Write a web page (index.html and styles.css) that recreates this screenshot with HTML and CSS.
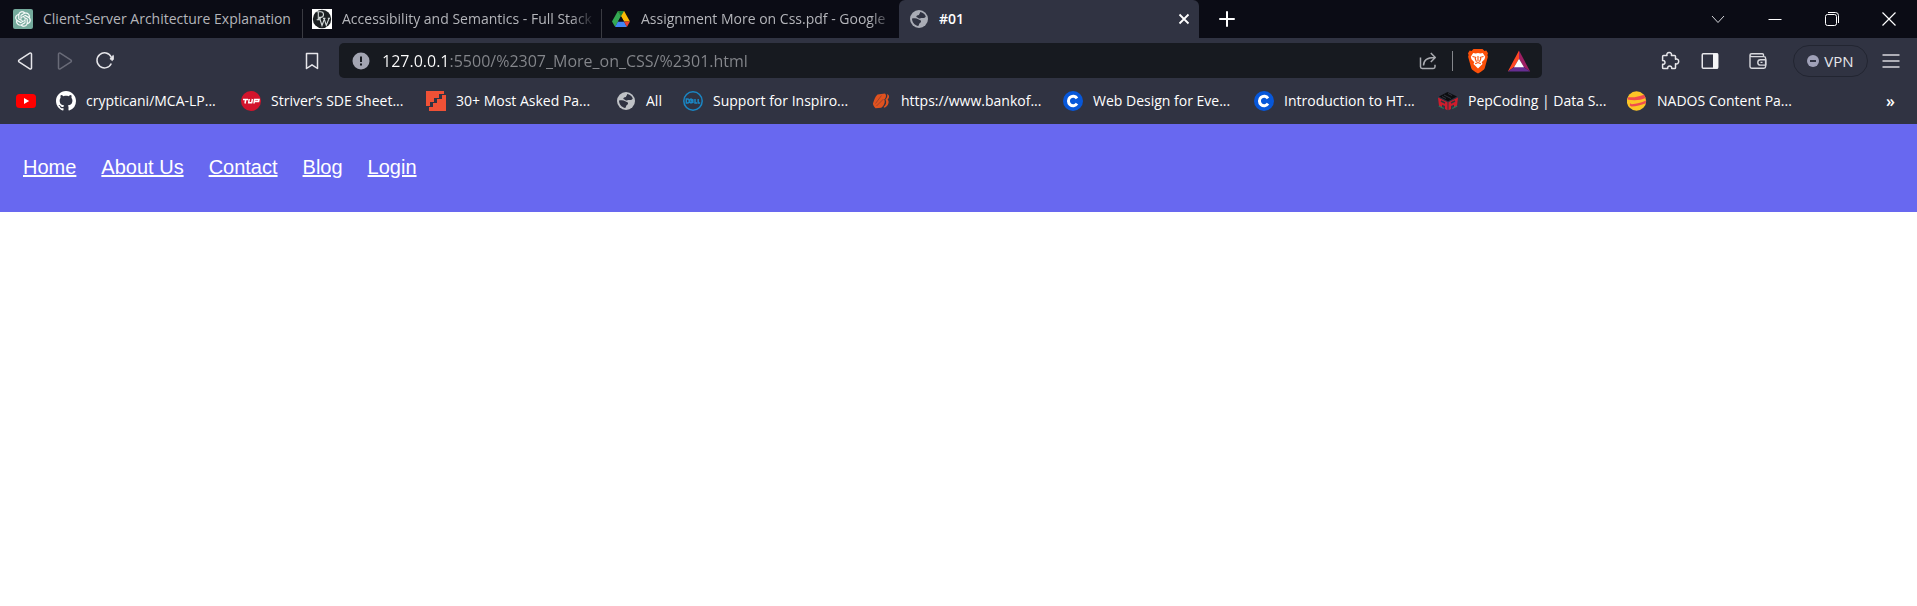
FILE: index.html
```html
<!DOCTYPE html>
<html lang="en">
<head>
<meta charset="utf-8">
<meta name="viewport" content="width=device-width, initial-scale=1">
<title>#01</title>
<link rel="stylesheet" href="styles.css">
</head>
<body>
<header class="browser">
  <div class="tabstrip">
    <div class="tab">
      <svg class="icon" viewBox="0 0 20 20" aria-hidden="true"><rect width="20" height="20" rx="2" fill="#74aa9c"/><path transform="translate(2.200 2.200) scale(.65)" fill="#fff" stroke="#fff" stroke-width=".3" d="M22.2819 9.8211a5.9847 5.9847 0 0 0-.5157-4.9108 6.0462 6.0462 0 0 0-6.5098-2.9A6.0651 6.0651 0 0 0 4.9807 4.1818a5.9847 5.9847 0 0 0-3.9977 2.9 6.0462 6.0462 0 0 0 .7427 7.0966 5.98 5.98 0 0 0 .511 4.9107 6.051 6.051 0 0 0 6.5146 2.9001A5.9847 5.9847 0 0 0 13.2599 24a6.0557 6.0557 0 0 0 5.7718-4.2058 5.9894 5.9894 0 0 0 3.9977-2.9001 6.0557 6.0557 0 0 0-.7475-7.0729zm-9.022 12.6081a4.4755 4.4755 0 0 1-2.8764-1.0408l.1419-.0804 4.7783-2.7582a.7948.7948 0 0 0 .3927-.6813v-6.7369l2.02 1.1686a.071.071 0 0 1 .038.052v5.5826a4.504 4.504 0 0 1-4.4945 4.4944zm-9.6607-4.1254a4.4708 4.4708 0 0 1-.5346-3.0137l.142.0852 4.783 2.7582a.7712.7712 0 0 0 .7806 0l5.8428-3.3685v2.3324a.0804.0804 0 0 1-.0332.0615L9.74 19.9502a4.4992 4.4992 0 0 1-6.1408-1.6464zM2.3408 7.8956a4.485 4.485 0 0 1 2.3655-1.9728V11.6a.7664.7664 0 0 0 .3879.6765l5.8144 3.3543-2.0201 1.1685a.0757.0757 0 0 1-.071 0l-4.8303-2.7865A4.504 4.504 0 0 1 2.3408 7.872zm16.5963 3.8558L13.1038 8.364 15.1192 7.2a.0757.0757 0 0 1 .071 0l4.8303 2.7913a4.4944 4.4944 0 0 1-.6765 8.1042v-5.6772a.79.79 0 0 0-.407-.667zm2.0107-3.0231l-.142-.0852-4.7735-2.7818a.7759.7759 0 0 0-.7854 0L9.409 9.2297V6.8974a.0662.0662 0 0 1 .0284-.0615l4.8303-2.7866a4.4992 4.4992 0 0 1 6.6802 4.66zM8.3065 12.863l-2.02-1.1638a.0804.0804 0 0 1-.038-.0567V6.0742a4.4992 4.4992 0 0 1 7.3757-3.4537l-.142.0805L8.704 5.459a.7948.7948 0 0 0-.3927.6813zm1.0976-2.3654l2.602-1.4998 2.6069 1.4998v2.9994l-2.5974 1.4997-2.6067-1.4997Z"/></svg>
      <button class="tab-title" type="button">Client-Server Architecture Explanation</button>
    </div>
    <div class="tab">
      <svg class="icon" viewBox="0 0 20 20" aria-hidden="true"><rect width="20" height="20" fill="#fff"/><circle cx="10" cy="10" r="9.200" fill="#1c2023"/><g fill="none" stroke="#d4dada" stroke-width="1.100"><path d="M4.500 2.800h4.200a2.700 2.700 0 0 1 0 5.600H7M6.300 3v7.500M4.700 10.800h3.600"/><path d="M7.600 9.200 10 16.500l2.300-6.300 2 6.200 2.800-7.200M6.400 9.200h2.500M11 9.400h2.400M15.800 9.200h2.200"/></g></svg>
      <button class="tab-title tab-title-faded" type="button">Accessibility and Semantics - Full Stack</button>
    </div>
    <div class="tab">
      <svg class="icon" viewBox="0 0 20 20" aria-hidden="true"><path fill="#fbbc04" d="M13.100 2 19 12.600h-6L6.900 2z"/><path fill="#34a853" d="M6.900 2 10 7.300 4.200 18 1 12.600z"/><path fill="#188038" d="M6.900 2h6.200L10 7.300z"/><path fill="#4285f4" d="M7 12.600h6L15.900 18H4.100z"/><path fill="#ea4335" d="M13 12.600h6L15.900 18z"/><path fill="#0b0c15" d="m10 7.300 3 5.300H7z"/></svg>
      <button class="tab-title tab-title-faded" type="button">Assignment More on Css.pdf - Google</button>
    </div>
    <div class="tab tab-active">
      <svg class="icon" viewBox="0 0 20 20" aria-hidden="true"><circle cx="10" cy="10" r="9" fill="#a9acb5"/><path fill="#303342" d="M11.100 3.100c2.600.4 4.900 2 5.700 4.500-.8 1.300-2.200 1.700-3.800 1.400-1.300-.3-1.500.6-2.700.5-1.400-.2-1.700-1.200-3-1.400.2-1.500 1-1.900 2.600-2 .3-1.400 1.300-1.500 1.200-3zM3 9.600c2.200-.3 4.600-.5 6.300.6 1.100.7 2.300.5 2.700 1.900.3 1.300-.8 1.700-1.600 2.500-.6.7-.1 1.800-1.200 2.400C5.900 16.600 3 13.500 3 9.600z"/></svg>
      <button class="tab-title" type="button">#01</button>
      <button class="tab-close" type="button" aria-label="Close tab"><svg width="12" height="12" viewBox="0 0 12 12"><path d="m1.500 1.500 9 9m0-9-9 9" stroke="#fff" stroke-width="1.800"/></svg></button>
    </div>
    <button class="new-tab" type="button" aria-label="New tab"><svg width="16" height="16" viewBox="0 0 16 16"><path d="M8 1v14M1 8h14" stroke="#fff" stroke-width="2" stroke-linecap="round"/></svg></button>
    <div class="window-controls">
      <button type="button" aria-label="Search tabs"><svg width="14" height="14" viewBox="0 0 14 14" fill="none" stroke="#d5d6da"><path d="m1 4 6 6.500L13 4"/></svg></button>
      <button type="button" aria-label="Minimize"><svg width="14" height="14" viewBox="0 0 14 14" stroke="#fff"><path d="M.5 7.500h13"/></svg></button>
      <button type="button" aria-label="Restore"><svg width="14" height="14" viewBox="0 0 14 14" fill="none" stroke="#fff"><rect x=".5" y="2.500" width="11" height="11" rx="2"/><path d="M3 .5h7.500a3 3 0 0 1 3 3V11"/></svg></button>
      <button type="button" aria-label="Close"><svg width="14" height="14" viewBox="0 0 14 14" stroke="#fff" stroke-width="1.200"><path d="m.5.500 13 13m0-13-13 13"/></svg></button>
    </div>
  </div>

  <div class="toolbar">
    <button class="tool" type="button" aria-label="Back"><svg width="18" height="20" viewBox="0 0 18 20" fill="none" stroke="#e6e6ea" stroke-width="1.500" stroke-linejoin="round"><path d="M13.800 2.200c.8-.5 1.700-.1 1.700.8v14c0 .9-.9 1.300-1.700.8L3 10.800c-.6-.5-.6-1.100 0-1.600z"/></svg></button>
    <button class="tool" type="button" aria-label="Forward"><svg width="18" height="20" viewBox="0 0 18 20" fill="none" stroke="#696b78" stroke-width="1.500" stroke-linejoin="round"><path d="M4.200 2.200c-.8-.5-1.700-.1-1.700.8v14c0 .9.9 1.300 1.700.8L15 10.800c.6-.5.6-1.100 0-1.600z"/></svg></button>
    <button class="tool" type="button" aria-label="Reload"><svg width="20" height="20" viewBox="0 0 20 20"><path d="M16.300 12.500A7.500 7.500 0 1 1 16.200 6" fill="none" stroke="#e6e6ea" stroke-width="1.500"/><path d="M18.300 8.400v-4l-3.400 3.200 2.400 2z" fill="#e6e6ea" stroke="#e6e6ea" stroke-linejoin="round"/></svg></button>
    <button class="tool save" type="button" aria-label="Bookmark this page"><svg width="14" height="18" viewBox="0 0 14 18" fill="none" stroke="#e6e6ea" stroke-width="1.500" stroke-linejoin="round"><path d="M1.500 1.500h11v15L7 12.800l-5.500 3.700z"/></svg></button>
    <form class="omnibox">
      <svg width="18" height="18" viewBox="0 0 18 18" aria-hidden="true"><circle cx="9" cy="9" r="8.500" fill="#a3a5b2"/><path d="M9 4.500v5.500" stroke="#171a20" stroke-width="2"/><path d="M9 11.500v2" stroke="#171a20" stroke-width="2"/></svg>
      <input class="url" type="text" aria-label="Address" value="127.0.0.1:5500/%2307_More_on_CSS/%2301.html">
      <button type="button" aria-label="Share"><svg width="20" height="20" viewBox="0 0 20 20" fill="none" stroke="#a9abb0" stroke-width="1.500" stroke-linejoin="round"><path d="M2.500 6.500v9.300c0 1 .7 1.700 1.700 1.700h11.100c1 0 1.700-.7 1.700-1.700v-2"/><path d="M5.500 14.500c0-5 3.500-8 11-8M12.800 2l4.500 4.500-4.500 4.500"/></svg></button>
      <span class="divider"></span>
      <button type="button" aria-label="Brave Shields"><svg width="22" height="26" viewBox="0 0 22 26"><path d="M6.500 1h9l2 2 1.800-.4L21 5.200l-.6 1.800.5 1.800-3.200 11.400c-.5 1.600-2.700 3-6.700 5.200-4-2.200-6.200-3.600-6.700-5.200L1.100 8.800 1.600 7 1 5.200l1.700-2.600 1.800.4z" fill="#fb5009"/><path d="m6.200 5 2.500.6L11 5l2.300.6 2.500-.6 2.400 3.700-.7 2.500-2.800 3.100.8 1.800-1.800 1.700L11 20.500l-2.700-2.700-1.800-1.700.8-1.800-2.800-3.100-.7-2.500z" fill="#fff"/><path d="m5.500 8.500 3.200.8-.5 1.500 1.300 3M16.500 8.500l-3.200.8.500 1.500-1.300 3M11 8v5.500M8.200 15.800 11 14.500l2.800 1.300" fill="none" stroke="#fb5009" stroke-width="1.100"/></svg></button>
      <button type="button" aria-label="Brave Rewards"><svg width="24" height="22" viewBox="0 0 24 22"><path fill="#ff4724" d="M12 .5v8.300L7.200 17 .8 21.500z"/><path fill="#9e1f63" d="m12 .5 11.200 21-6.400-4.500L12 8.800z"/><path fill="#662d91" d="M.8 21.500 7.200 17h9.600l6.400 4.500z"/><path fill="#fff" d="m12 8.800 5 8.500H7z"/></svg></button>
    </form>
    <button class="tool" type="button" aria-label="Extensions"><svg width="20" height="20" viewBox="0 0 20 20" fill="none" stroke="#e6e6ea" stroke-width="1.500" stroke-linejoin="round"><path d="M3.500 4.500H7c-.5-1.500.3-3 2.200-3s2.700 1.500 2.200 3h3.200c.6 0 .9.300.9.900v2.900c1.500-.6 3.200.3 3.200 2.200s-1.700 2.800-3.200 2.200v4c0 .6-.3.900-.9.900h-2.900c.3-1.500-.6-2.600-2-2.600s-2.300 1.100-2 2.600H3.500c-.6 0-.9-.3-.9-.9v-3.400c1.400.3 2.400-.5 2.400-1.900S4 9.200 2.600 9.500V5.400c0-.6.3-.9.900-.9z"/></svg></button>
    <button class="tool" type="button" aria-label="Sidebar"><svg width="18" height="18" viewBox="0 0 18 18"><rect x="1.250" y="1.750" width="15.500" height="14.500" rx="1" fill="none" stroke="#e6e6ea" stroke-width="1.500"/><path d="M12 1.500h5v15h-5z" fill="#f4f4f6"/></svg></button>
    <button class="tool wallet" type="button" aria-label="Wallet"><svg width="18" height="18" viewBox="0 0 18 18" fill="none" stroke="#d7d8dd" stroke-width="1.400" stroke-linejoin="round"><path d="M14.500 4.500V2.800c0-.7-.4-1.100-1.100-1.100H2.600C1.700 1.700 1 2.200 1 3.100s.7 1.500 1.600 1.500h12.300c1.100 0 1.700.6 1.700 1.700v8.300c0 1.100-.6 1.700-1.700 1.700H2.700C1.600 16.300 1 15.700 1 14.600V3.100"/><path d="M16.800 7.700h-5.300a2.700 2.700 0 0 0 0 5.400h5.300zM11.500 10.400h2"/></svg></button>
    <button class="vpn" type="button"><svg width="12" height="12" viewBox="0 0 12 12" aria-hidden="true"><circle cx="6" cy="6" r="6" fill="#a0a1b8"/><path d="M3 6h6" stroke="#303342" stroke-width="2"/></svg>VPN</button>
    <button class="tool menu" type="button" aria-label="Menu"><svg width="18" height="16" viewBox="0 0 18 16" stroke="#d7d8dd" stroke-width="1.500"><path d="M.5 2h17M.5 8h17M.5 14h17"/></svg></button>
  </div>

  <nav class="bookmarks" aria-label="Bookmarks">
    <a href="#" aria-label="YouTube"><svg class="icon" viewBox="0 0 20 20"><rect y="3" width="20" height="14" rx="3.500" fill="#f00"/><path d="m8 7 5.200 3L8 13z" fill="#fff"/></svg></a>
    <a href="#"><svg class="icon" viewBox="0 0 16 16" aria-hidden="true"><path fill="#fff" d="M8 0C3.580 0 0 3.580 0 8c0 3.540 2.290 6.530 5.470 7.590.4.070.55-.17.55-.38 0-.19-.01-.82-.01-1.490-2.010.37-2.530-.49-2.690-.94-.09-.23-.48-.94-.82-1.130-.28-.15-.68-.52-.01-.53.63-.01 1.080.58 1.230.82.72 1.210 1.870.87 2.330.66.070-.52.280-.87.510-1.070-1.780-.2-3.640-.89-3.640-3.950 0-.87.310-1.590.82-2.150-.08-.2-.36-1.020.08-2.120 0 0 .67-.21 2.200.82.64-.18 1.320-.27 2-.27s1.360.09 2 .27c1.530-1.040 2.200-.82 2.200-.82.44 1.100.16 1.920.08 2.120.51.56.82 1.270.82 2.150 0 3.070-1.870 3.750-3.650 3.950.29.25.54.73.54 1.480 0 1.070-.01 1.930-.01 2.200 0 .21.15.46.55.38A8.010 8.010 0 0 0 16 8c0-4.420-3.580-8-8-8z"/></svg>crypticani/MCA-LP...</a>
    <a href="#"><svg class="icon" viewBox="0 0 20 20" aria-hidden="true"><circle cx="10" cy="10" r="10" fill="#d3142c"/><g fill="none" stroke="#fff" stroke-width="1.500"><path d="M2 8.500h5M4.700 8.500 4 12.500M8.200 8 7.700 11.700h3l.7-3.700M13 12.500l.6-4H18l-.4 2h-3.800"/></g></svg>Striver’s SDE Sheet...</a>
    <a href="#"><svg class="icon" viewBox="0 0 20 20" aria-hidden="true"><path fill="#f05136" d="M0 0h18v3h-5v4H8v4H4v4H0zM20 4v16H3v-4h4v-4h4V8h5V4z"/></svg>30+ Most Asked Pa...</a>
    <a href="#"><svg class="icon" viewBox="0 0 20 20" aria-hidden="true"><circle cx="10" cy="10" r="9" fill="#bfc2c6"/><path fill="#303342" d="M11.100 3.100c2.600.4 4.900 2 5.700 4.500-.8 1.300-2.200 1.700-3.800 1.400-1.300-.3-1.500.6-2.700.5-1.400-.2-1.700-1.200-3-1.400.2-1.500 1-1.900 2.600-2 .3-1.400 1.300-1.500 1.200-3zM3 9.600c2.200-.3 4.600-.5 6.300.6 1.100.7 2.300.5 2.700 1.900.3 1.300-.8 1.700-1.600 2.500-.6.7-.1 1.800-1.200 2.400C5.900 16.600 3 13.500 3 9.600z"/></svg>All</a>
    <a href="#"><svg class="icon" viewBox="0 0 20 20" aria-hidden="true"><g fill="none" stroke="#1a86c4" stroke-width="1.500"><circle cx="10" cy="10" r="9.200"/><path d="M3.300 8v4h1.200a2 2 0 0 0 0-4zM8 8l2 2-2 2-2-2zM10.200 8.200 8.700 10l1.600 1.900M12 8v4h2M15.200 8v4h2"/></g></svg>Support for Inspiro...</a>
    <a href="#"><svg class="icon" viewBox="0 0 20 20" aria-hidden="true"><path fill="#e0521f" d="M6.500 3.500 14 2.500c1.800 1.500 1 4.700-.8 6 1.500 2.300-.2 6.500-3 8.300l-5.700.4C3 15.500 1.800 14 2 12.200 3.500 8.500 4 5.500 6.500 3.500z"/><path fill="#e0521f" d="M16 3c2.600.8 2.700 3.700.6 5.600 2.300 2.200.6 6.400-3 8.200l-1-.8c2.500-2 3.400-4.800 1.800-7.500 1.700-1.500 2.300-3.500 1.600-5.500z"/><path fill="none" stroke="#8b3f2e" stroke-width=".8" d="m4.500 12.500 6-8M5.500 15l7-7"/></svg>https://www.bankof...</a>
    <a href="#"><svg class="icon" viewBox="0 0 20 20" aria-hidden="true"><circle cx="10" cy="10" r="10" fill="#0757d9"/><path d="M14 7.300a4.700 4.700 0 1 0 0 5.400" fill="none" stroke="#fff" stroke-width="3"/></svg>Web Design for Eve...</a>
    <a href="#"><svg class="icon" viewBox="0 0 20 20" aria-hidden="true"><circle cx="10" cy="10" r="10" fill="#0757d9"/><path d="M14 7.300a4.700 4.700 0 1 0 0 5.400" fill="none" stroke="#fff" stroke-width="3"/></svg>Introduction to HT...</a>
    <a href="#"><svg class="icon" viewBox="0 0 20 20" aria-hidden="true"><path fill="#0c0d10" d="M9.500 1 19 5.500l-9 4.700L1 5.500z"/><path stroke="#3a3d4a" stroke-width=".8" fill="none" d="m6 4 7 3.500M10 2.500l4 2M4 5.500l4 2"/><path fill="#cf1c2c" d="m0 6.500 9.500 4.700v8L7 18v-3l-3-1.300v3L1 15zM20 6.500l-9.500 4.700v8L13 18v-3l3-1.300v3l3-1.700z"/><path stroke="#30343c" stroke-width="1.400" fill="none" d="m3 10 4 2M17 10l-4 2"/><path stroke="#29785c" stroke-width="1.300" d="m.8 15 5 2.500M19.200 15l-5 2.500"/></svg>PepCoding | Data S...</a>
    <a href="#"><svg class="icon" viewBox="0 0 20 20" aria-hidden="true"><circle cx="9.500" cy="10" r="9.700" fill="#fcc526"/><path fill="#f04b4f" d="M1.200 6.200c6 .6 10.500-.5 15.800-2.400l1.600 3.300C13 9.500 7 9.900.4 8.600zM3 12.200l1.800 1c4.700-.2 9.600-1.300 14.200-3.600l-.2 2.700c-4.500 2-9.500 3.200-14.500 3.200l-1.500-1z"/></svg>NADOS Content Pa...</a>
    <button class="overflow" type="button" aria-label="More bookmarks">»</button>
  </nav>
</header>

<nav class="site-nav" aria-label="Main">
  <a href="#">Home</a>
  <a href="#">About Us</a>
  <a href="#">Contact</a>
  <a href="#">Blog</a>
  <a href="#">Login</a>
</nav>
</body>
</html>
```

FILE: styles.css
```css
* {
  box-sizing: border-box;
}

body {
  margin: 0;
  background: #fff;
  font-family: "Liberation Sans", Arial, sans-serif;
}

button {
  display: flex;
  align-items: center;
  justify-content: center;
  padding: 0;
  border: 0;
  background: none;
  color: inherit;
  font: inherit;
}

svg {
  display: block;
  flex: none;
}

.browser {
  background: #303342;
  color: #fff;
  font-family: "Open Sans", "Noto Sans", sans-serif;
  font-size: 14px;
}

.icon {
  width: 20px;
  height: 20px;
}

/* Tab strip */
.tabstrip {
  display: flex;
  height: 38px;
  padding-left: 4px;
  background: #0b0c15;
}

.tab {
  display: flex;
  align-items: center;
  gap: 10px;
  flex: 0 1 299px;
  min-width: 0;
  padding: 0 7px 0 9px;
  background: linear-gradient(#3a3b42, #3a3b42) right bottom / 1px 29px no-repeat;
  color: #b4b5ba;
}

.tab-title {
  flex: 1;
  justify-content: flex-start;
  min-width: 0;
  padding-bottom: 2px;
  overflow: hidden;
  white-space: nowrap;
}

.tab-title-faded {
  -webkit-mask-image: linear-gradient(to left, transparent, #000 24px);
  mask-image: linear-gradient(to left, transparent, #000 24px);
}

.tab-active {
  flex-basis: 300px;
  margin-left: -2px;
  padding: 0 9px 0 10px;
  border-radius: 6px 6px 0 0;
  background: #303342;
  color: #fff;
  font-weight: 600;
}

.new-tab {
  width: 56px;
}

.window-controls {
  display: flex;
  margin-left: auto;
}

.window-controls button {
  width: 57px;
}

/* Toolbar */
.toolbar {
  display: flex;
  align-items: center;
  height: 45px;
  padding: 0 6px 0 5px;
}

.tool {
  width: 40px;
  height: 34px;
}

.save {
  margin: 0 7px 0 167px;
}

.omnibox {
  display: flex;
  align-items: center;
  flex: 1;
  min-width: 0;
  height: 35px;
  margin-right: 108px;
  padding: 0 11px 0 13px;
  border-radius: 5px;
  background: #171a20;
}

.url {
  flex: 1;
  min-width: 0;
  margin-left: 12px;
  padding: 0;
  border: 0;
  outline: 0;
  background: linear-gradient(to right, #fff 68px, #85878c 68px);
  -webkit-background-clip: text;
  background-clip: text;
  color: transparent;
  font: 16px/24px "Open Sans", "Noto Sans", sans-serif;
}

.divider {
  width: 1px;
  height: 20px;
  margin: 0 14px;
  background: #85878c;
}

.omnibox button + button {
  margin-left: 18px;
}

.wallet {
  margin-left: 8px;
}

.vpn {
  gap: 5px;
  width: 75px;
  height: 32px;
  margin: 0 3px 0 15px;
  border: 1px solid #222531;
  border-radius: 16px;
  color: #e6e6ea;
  font-size: 15px;
}

/* Bookmarks bar */
.bookmarks {
  display: grid;
  grid-template-columns: 40px 185px 185px 190px 67px 188px 192px 191px 184px 189px 1fr auto;
  align-items: center;
  height: 41px;
  padding: 0 22px 5px 16px;
}

.bookmarks a {
  display: flex;
  align-items: center;
  gap: 10px;
  color: #fff;
  line-height: 20px;
  text-decoration: none;
  white-space: nowrap;
}

.overflow {
  font-size: 16px;
  font-weight: 600;
}

/* Page */
.site-nav {
  display: flex;
  align-items: center;
  gap: 25px;
  height: 88px;
  padding: 0 23px 2px;
  background: #6868f0;
  font-size: 20px;
}

.site-nav a {
  color: #fff;
}
```
